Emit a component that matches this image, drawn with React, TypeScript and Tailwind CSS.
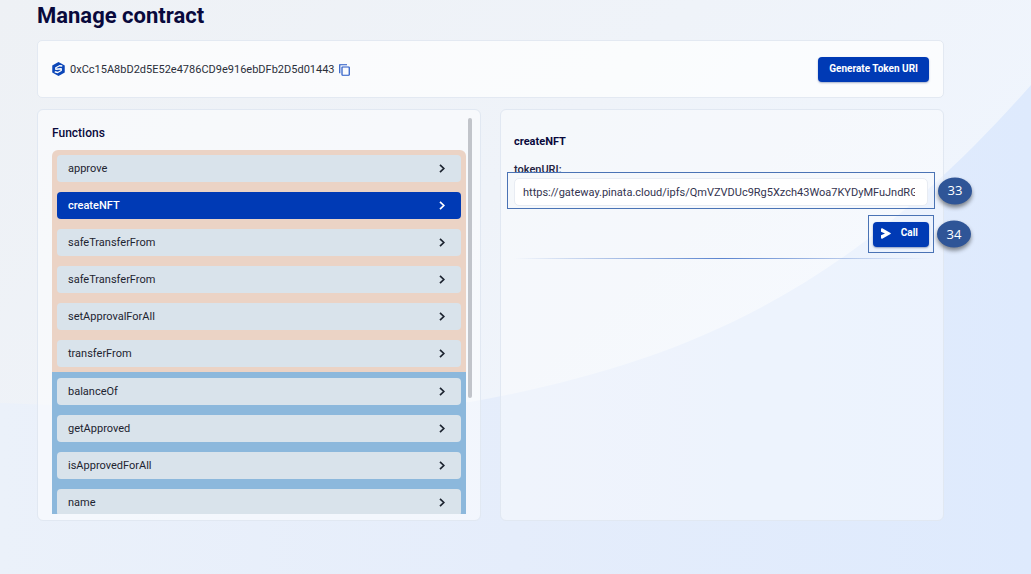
import { useState } from "react";

type Fn = { id: number; name: string };

const writeFns: Fn[] = [
  { id: 1, name: "approve" },
  { id: 2, name: "createNFT" },
  { id: 3, name: "safeTransferFrom" },
  { id: 4, name: "safeTransferFrom" },
  { id: 5, name: "setApprovalForAll" },
  { id: 6, name: "transferFrom" },
];

const readFns: Fn[] = [
  { id: 7, name: "balanceOf" },
  { id: 8, name: "getApproved" },
  { id: 9, name: "isApprovedForAll" },
  { id: 10, name: "name" },
];

function Backdrop() {
  return (
    <svg
      className="absolute inset-0 -z-10 h-full w-full"
      viewBox="0 0 1031 574"
      preserveAspectRatio="none"
      aria-hidden="true"
    >
      <defs>
        <linearGradient id="sky" x1="0" y1="0" x2="1" y2="0.6">
          <stop offset="0" stopColor="#eef1f5" />
          <stop offset="0.5" stopColor="#eff3f9" />
          <stop offset="1" stopColor="#f0f6ff" />
        </linearGradient>
        <linearGradient id="hill" x1="0" y1="0" x2="1" y2="0">
          <stop offset="0" stopColor="#ebf1fa" />
          <stop offset="0.5" stopColor="#e5edfb" />
          <stop offset="1" stopColor="#deeafd" />
        </linearGradient>
      </defs>
      <rect width="1031" height="574" fill="url(#sky)" />
      <path
        d="M0 403 C160 410 330 410 470 402 C690 362 850 290 1031 85 V574 H0 Z"
        fill="url(#hill)"
      />
    </svg>
  );
}

function HexLogo() {
  return (
    <svg className="h-[14px] w-[13px] shrink-0" viewBox="0 0 26 28" aria-hidden="true">
      <path d="M13 0 25.5 7v14L13 28 .5 21V7z" fill="#0b46b8" />
      <path
        d="M20.500 8 15 7.500 7.500 11.500 7.500 14.500 18.500 13.500 18.500 17 11.500 21 5.500 19.500"
        fill="none"
        stroke="#fff"
        strokeWidth="2.6"
        strokeLinejoin="round"
      />
    </svg>
  );
}

function CopyIcon() {
  return (
    <svg className="block h-[12px] w-[11px]" viewBox="0 0 22 24" fill="none" stroke="#2457c5" strokeWidth="2.4">
      <path d="M1.5 18.5V1.5H16" />
      <rect x="6" y="6" width="14.5" height="16.5" rx="1" />
    </svg>
  );
}

function Chevron() {
  return (
    <svg className="h-[9px] w-[6px]" viewBox="0 0 6 9" fill="none" stroke="currentColor" strokeWidth="1.7" aria-hidden="true">
      <path d="M1 .8 4.8 4.500 1 8.200" />
    </svg>
  );
}

function FnRow({ fn, active, onSelect }: { fn: Fn; active: boolean; onSelect: (id: number) => void }) {
  return (
    <li className="p-[5px]">
      <button
        type="button"
        aria-pressed={active}
        onClick={() => onSelect(fn.id)}
        className={
          active
            ? "flex h-[27px] w-full items-center justify-between rounded-[4px] bg-[#003ab5] pr-4 pl-[11px] text-[11px] leading-[15px] font-medium text-white"
            : "flex h-[27px] w-full items-center justify-between rounded-[4px] bg-[#d9e3eb] pr-4 pl-[11px] text-[11px] leading-[15px] text-[#1d2430]"
        }
      >
        <span>{fn.name}</span>
        <Chevron />
      </button>
    </li>
  );
}

function Marker({ label }: { label: string }) {
  return (
    <span className="absolute top-1/2 left-full ml-1 flex h-[27px] w-[34px] -translate-y-1/2 items-center justify-center rounded-[50%] bg-[#2f5597] pb-[2px] font-['Open_Sans',sans-serif] text-[13px] leading-[16px] text-white shadow-[0_3px_4px_rgba(0,0,0,0.45)]">
      {label}
    </span>
  );
}

export default function App() {
  const [selected, setSelected] = useState(2);
  const [uri, setUri] = useState(
    "https://gateway.pinata.cloud/ipfs/QmVZVDUc9Rg5Xzch43Woa7KYDyMFuJndRGk8sTq"
  );
  const current = [...writeFns, ...readFns].find((f) => f.id === selected);

  return (
    <div className="relative isolate min-h-screen overflow-hidden font-[Roboto,sans-serif]">
      <Backdrop />
      <main className="flex flex-col pt-[2px] pr-[87px] pb-10 pl-[37px]">
        <h1 className="text-[22px] leading-[28px] font-bold text-[#09093c]">Manage contract</h1>

        <section className="mt-[10px] flex h-[58px] items-center justify-between rounded-[5px] border border-[#e3e9f2] bg-white/70 px-[14px]">
          <div className="flex items-center gap-[5px]">
            <HexLogo />
            <div className="flex items-center gap-[4px] pt-[2px]">
              <span className="text-[11px] leading-[16px] text-[#2b2f3a]">0xCc15A8bD2d5E52e4786CD9e916ebDFb2D5d01443</span>
              <button type="button" aria-label="Copy address">
                <CopyIcon />
              </button>
            </div>
          </div>
          <button
            type="button"
            className="h-[25px] rounded-[4px] bg-[#003ab5] px-[11px] text-[10px] leading-[14px] font-bold text-white shadow-[0_1px_2px_rgba(0,30,100,0.35)]"
          >
            Generate Token URI
          </button>
        </section>

        <div className="mt-[11px] grid grid-cols-2 gap-[19px]">
          <section className="relative rounded-[6px] border border-[#e1e8f2] bg-white/50 pt-[14px] pr-[14px] pb-[6px] pl-[14px]">
            <h2 className="mb-[8px] text-[12px] leading-[18px] font-medium text-[#09093c]">Functions</h2>
            <div className="h-[364px] overflow-hidden">
              <ul className="rounded-t-[6px] bg-[#ebd3c5]">
                {writeFns.map((f) => (
                  <FnRow key={f.id} fn={f} active={f.id === selected} onSelect={setSelected} />
                ))}
              </ul>
              <ul className="bg-[#8cb8dc] pt-px">
                {readFns.map((f) => (
                  <FnRow key={f.id} fn={f} active={f.id === selected} onSelect={setSelected} />
                ))}
              </ul>
            </div>
            <div className="absolute top-2 right-2 h-[280px] w-[4px] rounded-full bg-[#c1c4ca]" />
          </section>

          <section className="rounded-[6px] border border-[#e1e8f2] bg-white/40 px-[6px] pt-[24px]">
            <h2 className="px-[7px] text-[11px] leading-[16px] font-bold text-[#09093c]">{current?.name}</h2>
            <label htmlFor="token-uri" className="mt-[12px] block px-[7px] text-[11px] leading-[16px] font-medium text-[#23233f]">
              tokenURI:
            </label>
            <div className="relative -mt-[6px] mr-[2px] h-[37px] border border-[#4a73b5] px-[6px] pt-[5px]">
              <input
                id="token-uri"
                value={uri}
                onChange={(e) => setUri(e.target.value)}
                className="block h-[28px] w-full rounded-[5px] border border-[#e8ecf3] bg-white pr-[12px] pl-[8px] text-[11px] text-[#33334f] outline-none"
              />
              <Marker label="33" />
            </div>
            <div className="relative mt-[6px] mr-[3px] ml-auto flex h-[38px] w-[66px] items-center justify-center border border-[#4a73b5]">
              <button
                type="button"
                className="flex h-[25px] w-[56px] items-center justify-between rounded-[4px] bg-[#003ab5] pr-[11px] pb-[2px] pl-[8px] text-[10px] leading-[14px] font-bold text-white shadow-[0_1px_2px_rgba(0,30,100,0.4)]"
              >
                <svg className="h-[11px] w-[10px]" viewBox="0 0 20 22" aria-hidden="true">
                  <path
                    d="M2.500.600 19 10a1.200 1.200 0 0 1 0 2L2.500 21.400C1 22 0 21 0 19.500V14.500L8 11 0 7.500V2.500C0 1 1 0 2.500.600z"
                    fill="#fff"
                  />
                </svg>
                Call
              </button>
              <Marker label="34" />
            </div>
            <div className="mx-[7px] mt-[5px] h-px bg-linear-to-r from-transparent via-[#5b84cf] to-transparent" />
          </section>
        </div>
      </main>
    </div>
  );
}
